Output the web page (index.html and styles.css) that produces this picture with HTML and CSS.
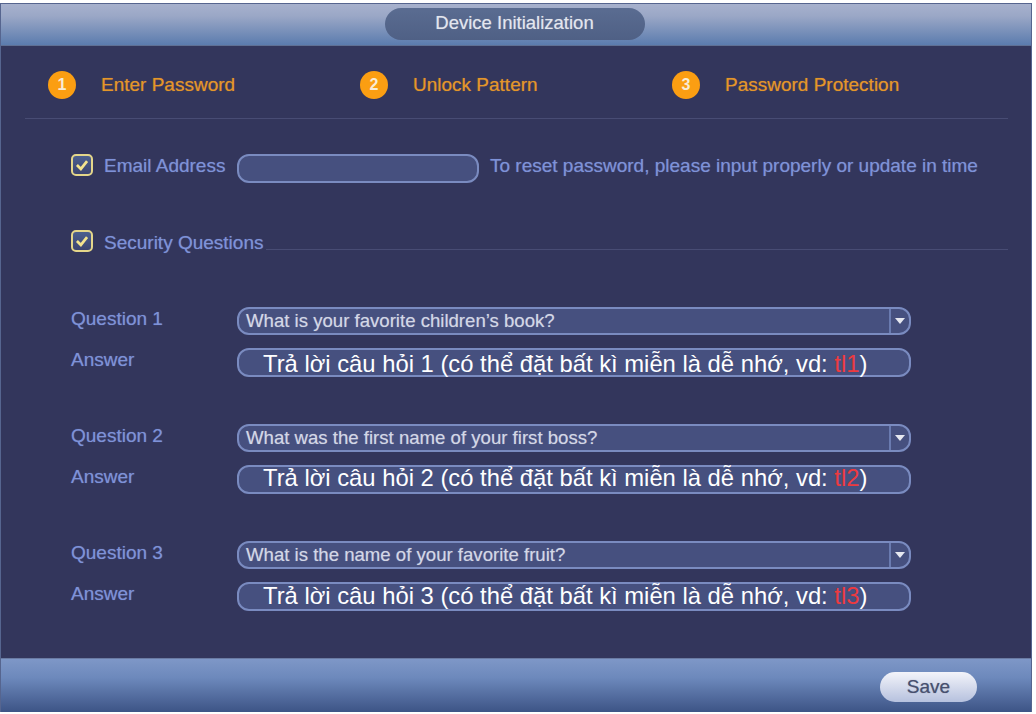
FILE: index.html
```html
<!DOCTYPE html>
<html lang="vi">
<head>
    <meta charset="UTF-8">
    <meta name="viewport" content="width=device-width, initial-scale=1.0">
    <title>Device Initialization</title>
    <link rel="stylesheet" href="styles.css">
</head>
<body>

<div class="window">
    <div class="header">
        <div class="title">Device Initialization</div>
    </div>

    <div class="content">
        <div class="steps">
            <div class="step"><span class="step-num">1</span><span class="step-name">Enter Password</span></div>
            <div class="step"><span class="step-num">2</span><span class="step-name">Unlock Pattern</span></div>
            <div class="step"><span class="step-num">3</span><span class="step-name">Password Protection</span></div>
        </div>

        <div class="email-row">
            <span class="check"><svg viewBox="0 0 16 16"><path d="M3.5 8 L7 11.5 L12.5 4.5"/></svg></span>
            <span class="label check-label email-label">Email Address</span>
            <div class="field email-field"></div>
            <span class="label hint">To reset password, please input properly or update in time</span>
        </div>

        <div class="security-row">
            <span class="check"><svg viewBox="0 0 16 16"><path d="M3.5 8 L7 11.5 L12.5 4.5"/></svg></span>
            <span class="label check-label security-label">Security Questions</span>
            <div class="security-line"></div>
        </div>

        <div class="question">
            <div class="q-row">
                <span class="label q-label">Question 1</span>
                <div class="field select"><span class="select-text">What is your favorite children’s book?</span><span class="select-arrow"></span></div>
            </div>
            <div class="q-row">
                <span class="label q-label">Answer</span>
                <div class="field answer">Trả lời câu hỏi 1 (có thể đặt bất kì miễn là dễ nhớ, vd: <span class="red">tl1</span>)</div>
            </div>
        </div>

        <div class="question">
            <div class="q-row">
                <span class="label q-label">Question 2</span>
                <div class="field select"><span class="select-text">What was the first name of your first boss?</span><span class="select-arrow"></span></div>
            </div>
            <div class="q-row">
                <span class="label q-label">Answer</span>
                <div class="field answer answer-2">Trả lời câu hỏi 2 (có thể đặt bất kì miễn là dễ nhớ, vd: <span class="red">tl2</span>)</div>
            </div>
        </div>

        <div class="question">
            <div class="q-row">
                <span class="label q-label">Question 3</span>
                <div class="field select"><span class="select-text">What is the name of your favorite fruit?</span><span class="select-arrow"></span></div>
            </div>
            <div class="q-row">
                <span class="label q-label">Answer</span>
                <div class="field answer answer-3">Trả lời câu hỏi 3 (có thể đặt bất kì miễn là dễ nhớ, vd: <span class="red">tl3</span>)</div>
            </div>
        </div>
    </div>

    <div class="footer">
        <button class="save">Save</button>
    </div>
</div>

</body>
</html>
```

FILE: styles.css
```css
body {
    margin: 0;
    background: #fff;
    font-family: "Liberation Sans", Arial, sans-serif;
}
.window {
    width: 1032px;
    height: 709px;
    margin-top: 3px;
    box-sizing: border-box;
    display: flex;
    flex-direction: column;
    background: #33365c;
    border: 1px solid #56658f;
    border-bottom: none;
}
.header {
    height: 41px;
    flex: none;
    display: flex;
    justify-content: center;
    align-items: center;
    background: linear-gradient(#a7b1cd, #9aa7c6 30%, #5b7cae);
    border-bottom: 1px solid #5f7094;
}
.title {
    width: 260px;
    height: 32px;
    margin: -1px 3px 0 0;
    line-height: 30px;
    text-align: center;
    font-size: 18.5px;
    color: #e3e6ee;
    text-shadow: 0 0 1px rgba(227, 230, 238, 0.5);
    border-radius: 16px;
    background: linear-gradient(#5a6c91, #4f6085);
}
.content {
    flex: 1;
    min-height: 0;
    padding: 0 23px 0 24px;
}
.steps {
    display: flex;
    height: 73px;
    box-sizing: border-box;
    padding: 6px 0 0 23px;
    align-items: center;
    border-bottom: 1px solid #484c74;
}
.step {
    width: 312px;
    display: flex;
    align-items: center;
}
.step-num {
    width: 28px;
    height: 28px;
    border-radius: 50%;
    margin-right: 25px;
    background: #fb9e12;
    color: #f8ecd6;
    font-size: 16px;
    font-weight: bold;
    line-height: 28px;
    text-align: center;
}
.step-name {
    color: #e4962a;
    font-size: 19px;
    text-shadow: 0 0 1px rgba(228, 150, 42, 0.6);
}
.label {
    color: #7e92d8;
    font-size: 19px;
    text-shadow: 0 0 1px rgba(126, 146, 216, 0.6);
}
.email-row {
    display: flex;
    align-items: center;
    height: 30px;
    margin-top: 34px;
    padding-left: 46px;
}
.email-row .check {
    margin-top: -6px;
}
.email-row .label {
    margin-top: -4px;
}
.check {
    width: 22px;
    height: 22px;
    box-sizing: border-box;
    flex: none;
    border: 2px solid #e4d68a;
    border-radius: 5px;
    background: linear-gradient(#4c5f8f, #3c4470);
}
.check svg {
    display: block;
    width: 18px;
    height: 18px;
    fill: none;
    stroke: #f4e48e;
    stroke-width: 2.4;
}
.check-label {
    margin-left: 11px;
}
.email-label {
    width: 122px;
    flex: none;
}
.security-label {
    margin-top: 3px;
}
.field {
    box-sizing: border-box;
    border: 2px solid #7a8bc0;
    border-radius: 12px;
    background: #46507f;
}
.email-field {
    width: 242px;
    height: 29px;
    margin-left: 11px;
    flex: none;
}
.hint {
    margin-left: 11px;
    white-space: nowrap;
}
.security-row {
    display: flex;
    align-items: center;
    height: 24px;
    margin-top: 46px;
    padding-left: 46px;
}
.security-line {
    flex: 1;
    height: 1px;
    margin: 16px 0 0 3px;
    background: #484c74;
}
.question {
    margin-bottom: 47px;
}
.security-row + .question {
    margin-top: 54px;
}
.q-row {
    display: flex;
    align-items: center;
    padding-left: 46px;
    margin-bottom: 13px;
}
.q-row:last-child {
    margin-bottom: 0;
}
.q-label {
    width: 166px;
    flex: none;
    margin-top: -4px;
}
.q-row:last-child .q-label {
    margin-top: -6px;
}
.select {
    width: 674px;
    height: 28px;
    display: flex;
    align-items: center;
    padding-left: 7px;
}
.select-text {
    flex: 1;
    color: #d3d7e6;
    font-size: 18.6px;
    text-shadow: 0 0 1px rgba(211, 215, 230, 0.5);
}
.select-arrow {
    width: 18px;
    height: 24px;
    flex: none;
    position: relative;
    border-left: 2px solid #6a7bb0;
}
.select-arrow::after {
    content: "";
    position: absolute;
    left: 4px;
    top: 9px;
    border: 5px solid transparent;
    border-top: 6px solid #e6e8f0;
}
.answer {
    width: 674px;
    height: 29px;
    line-height: 27px;
    padding-left: 24px;
    color: #fff;
    font-size: 23.8px;
    white-space: nowrap;
}
.answer-2 {
    line-height: 21px;
}
.answer-3 {
    line-height: 23px;
}
.red {
    color: #ee3a3f;
}
.footer {
    height: 54px;
    flex: none;
    display: flex;
    justify-content: flex-end;
    padding: 13px 54px 0 0;
    box-sizing: border-box;
    background: linear-gradient(#7e97c7, #6d89bc 35%, #3d5486);
    border-top: 1px solid #6a7ba3;
}
.save {
    width: 97px;
    height: 30px;
    padding: 0;
    border: none;
    border-radius: 15px;
    background: linear-gradient(#f3f4fa, #b6c1de);
    color: #47506f;
    font-family: inherit;
    font-size: 19px;
    text-shadow: 0 0 1px rgba(71, 80, 111, 0.6);
}
```
